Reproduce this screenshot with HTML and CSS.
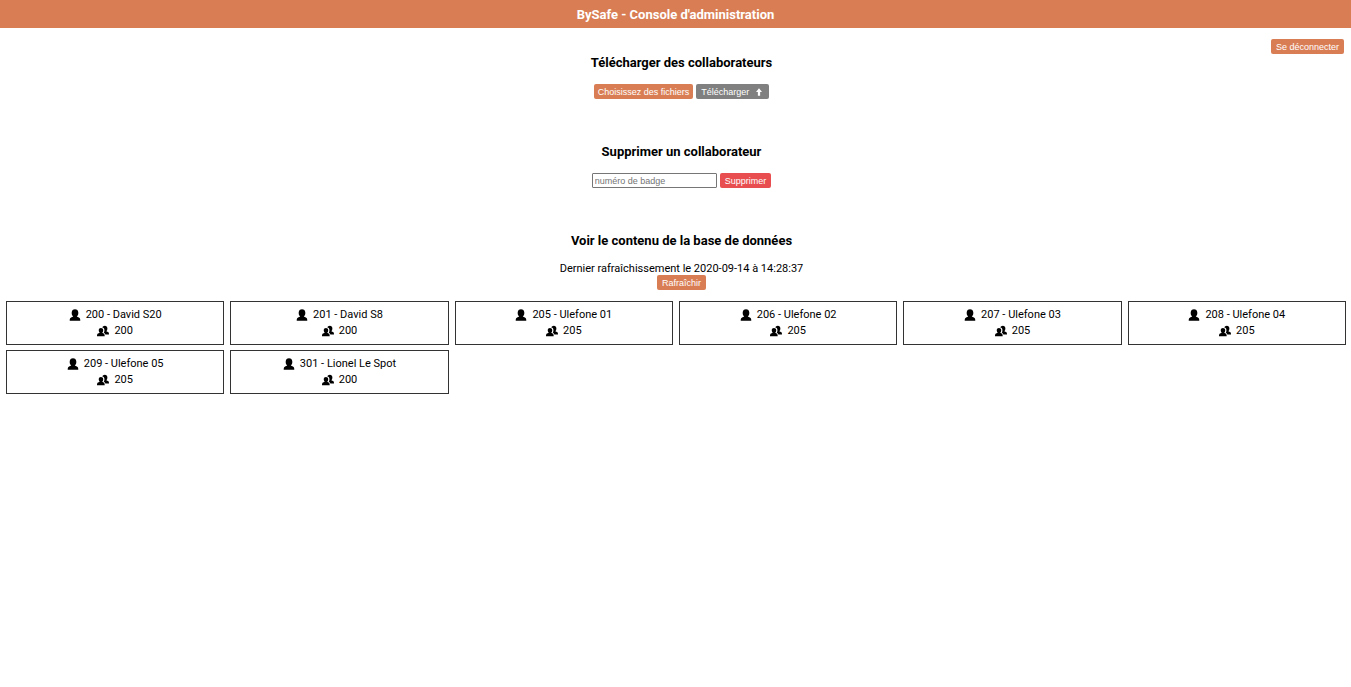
FILE: index.html
```html
<!DOCTYPE html>
<html lang="fr">
<head>
<meta charset="utf-8">
<title>BySafe - Console d'administration</title>
<link rel="stylesheet" href="styles.css">
</head>
<body>
<svg class="sprite" aria-hidden="true">
  <symbol id="user" viewBox="0 0 20 20"><path d="M7 12.500C5.300 11.300 4.500 9.300 4.500 7.200V6C4.500 2.500 6.800 .5 10 .5s5.500 2 5.500 5.500v1.200c0 2.100-.8 4.100-2.500 5.300l3.500 1.500c1.700.7 2.300 2.200 2.300 5.500H1.200c0-3.300.6-4.800 2.300-5.500z"/></symbol>
  <symbol id="users" viewBox="0 0 22 20"><path d="M5 13.200C3.900 12.300 3.200 11 3.200 9.300V8.500C3.200 6.100 4.900 4.500 7.300 4.500s4.100 1.600 4.100 4v.8c0 1.700-.7 3-1.800 3.900l2.600 1.300c1.400.7 1.900 2 1.900 5H0c0-3 .5-4.300 1.900-5z"/><path d="M9.800 3.700C10.400 1.500 12.100.200 14.400.200c2.800 0 4.600 1.800 4.600 4.600v1.100c0 2-.7 3.600-1.900 4.600l2.900 1.300c1.500.7 2 1.900 2 4.700h-6.700c-.4-1.600-1.200-2.600-2.900-3.400.8-1.100 1.200-2.400 1.200-4V8.300c0-2.400-1.400-4.100-3.800-4.600z"/></symbol>
</svg>
<header class="banner"><h1>BySafe - Console d'administration</h1></header>
<div class="session"><button class="btn">Se déconnecter</button></div>
<main>
  <section class="panel">
    <h2>Télécharger des collaborateurs</h2>
    <div class="controls">
      <button class="btn btn-files">Choisissez des fichiers</button>
      <button class="btn btn-upload">Télécharger <svg class="arrow" viewBox="0 0 8 10" aria-hidden="true"><path d="M4 0 8 5H5.500v5h-3V5H0z"/></svg></button>
    </div>
  </section>
  <section class="panel">
    <h2>Supprimer un collaborateur</h2>
    <div class="controls">
      <input class="badge" type="text" placeholder="numéro de badge" aria-label="numéro de badge">
      <button class="btn btn-delete">Supprimer</button>
    </div>
  </section>
  <section class="panel panel-data">
    <h2>Voir le contenu de la base de données</h2>
    <p>Dernier rafraîchissement le 2020-09-14 à 14:28:37</p>
    <button class="btn">Rafraîchir</button>
  </section>
  <ul class="cards">
    <li><span><svg class="icon"><use href="#user"/></svg>200 - David S20</span><span><svg class="icon"><use href="#users"/></svg>200</span></li>
    <li><span><svg class="icon"><use href="#user"/></svg>201 - David S8</span><span><svg class="icon"><use href="#users"/></svg>200</span></li>
    <li><span><svg class="icon"><use href="#user"/></svg>205 - Ulefone 01</span><span><svg class="icon"><use href="#users"/></svg>205</span></li>
    <li><span><svg class="icon"><use href="#user"/></svg>206 - Ulefone 02</span><span><svg class="icon"><use href="#users"/></svg>205</span></li>
    <li><span><svg class="icon"><use href="#user"/></svg>207 - Ulefone 03</span><span><svg class="icon"><use href="#users"/></svg>205</span></li>
    <li><span><svg class="icon"><use href="#user"/></svg>208 - Ulefone 04</span><span><svg class="icon"><use href="#users"/></svg>205</span></li>
    <li><span><svg class="icon"><use href="#user"/></svg>209 - Ulefone 05</span><span><svg class="icon"><use href="#users"/></svg>205</span></li>
    <li><span><svg class="icon"><use href="#user"/></svg>301 - Lionel Le Spot</span><span><svg class="icon"><use href="#users"/></svg>200</span></li>
  </ul>
</main>
</body>
</html>
```
FILE: styles.css
```css
* { box-sizing: border-box; }
body { margin: 0; background: #fff; color: #000; font: 11px/16px Roboto, sans-serif; }
.sprite { display: none; }
h1, h2, p { margin: 0; }
h1, h2 { font-size: 13px; line-height: 16px; font-weight: 700; }
.banner { padding: 7px 0 5px; background: #d97e54; border-bottom: 0; color: #fff; text-align: center; }
.session { display: flex; justify-content: flex-end; padding: 11px 7px 1px 0; }
.btn { display: inline-flex; align-items: center; justify-content: center; height: 15px; margin: 0; padding: 0 5px; border: 0; border-radius: 2px; background: #d97e54; color: #fff; font: 9px/14px "Liberation Sans", Arial, sans-serif; }
.btn-files { padding: 0 4px; }
.btn-upload { background: #808080; gap: 7px; padding-right: 7px; }
.btn-delete { background: #e84e4f; }
.arrow { width: 6px; height: 8px; fill: #fff; }
.panel { display: flex; flex-direction: column; align-items: center; padding-left: 12px; margin-bottom: 45px; }
.panel h2 { margin-bottom: 13px; }
.panel-data { margin-bottom: 11px; }
.panel-data h2 { margin-bottom: 14px; }
.panel-data p { line-height: 12px; }
.controls { display: flex; align-items: center; gap: 3px; }
.badge { width: 125px; height: 15px; padding: 0 2px; border: 1px solid #767676; border-radius: 1px; font: 9px/12px "Liberation Sans", Arial, sans-serif; }
.badge::placeholder { color: #757575; }
.cards { display: grid; grid-template-columns: repeat(6, 1fr); gap: 5px 6px; margin: 0; padding: 0 5px 0 6px; list-style: none; }
.cards li { display: flex; flex-direction: column; align-items: center; padding: 5px 0; border: 1px solid #333; }
.cards span { display: flex; align-items: center; gap: 5px; }
.icon { width: 12px; height: 12px; }
```
